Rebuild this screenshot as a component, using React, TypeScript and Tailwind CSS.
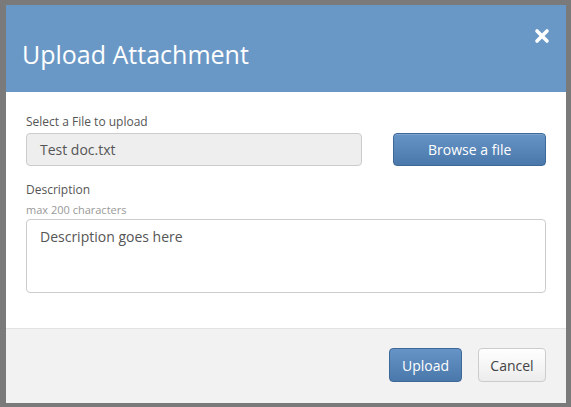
export default function App() {
  return (
    <div
      className="w-[571px] h-[407px] bg-[#7a7a7a] pt-[5px] pl-[6px]"
      style={{ fontFamily: '"Open Sans", sans-serif' }}
    >
      <div className="w-[560px] h-[398px] bg-white flex flex-col">
        <div className="h-[87px] bg-[#6a98c6] flex items-center justify-between pl-[16px] pr-[16px]">
          <h1 className="text-[25px] text-white font-normal leading-none pt-[11px]">Upload Attachment</h1>
          <svg width="16" height="16" viewBox="0 0 16 16" className="self-start mt-[23px]">
            <path d="M3 3 L13 13 M13 3 L3 13" stroke="white" strokeWidth="3.6" strokeLinecap="round" />
          </svg>
        </div>

        <div className="flex-1 px-[20px] pt-[22px]">
          <label className="block text-[12px] text-[#555] leading-[16px] mb-[3px]">Select a File to upload</label>
          <div className="flex items-center gap-[31px]">
            <div className="w-[337px] h-[33px] bg-[#eeeeee] border border-[#cccccc] rounded-[4px] flex items-center px-[13px] text-[14px] text-[#555]">
              Test doc.txt
            </div>
            <button className="w-[153px] h-[33px] rounded-[4px] border border-[#3d6898] bg-gradient-to-b from-[#6694c6] to-[#4a78aa] text-white text-[14px] shadow-[inset_0_1px_0_rgba(255,255,255,0.15)]">
              Browse a file
            </button>
          </div>

          <label className="block text-[12px] text-[#555] leading-[16px] mt-[16px]">Description</label>
          <div className="text-[11px] text-[#999] leading-[16px] mt-[4px] mb-[1px]">max 200 characters</div>
          <div className="w-[520px] h-[74px] border border-[#cccccc] rounded-[4px] px-[13px] pt-[6px] text-[14px] text-[#555]">
            Description goes here
          </div>
        </div>

        <div className="h-[75px] bg-[#f2f2f2] border-t border-[#e3e3e3] flex items-center justify-end gap-[16px] pr-[20px] pb-[2px]">
          <button className="w-[73px] h-[34px] rounded-[4px] border border-[#3d6898] bg-gradient-to-b from-[#6694c6] to-[#4a78aa] text-white text-[14px]">
            Upload
          </button>
          <button className="w-[68px] h-[34px] rounded-[4px] border border-[#cccccc] bg-gradient-to-b from-white to-[#ececec] text-[#444] text-[14px]">
            Cancel
          </button>
        </div>
      </div>
    </div>
  );
}
